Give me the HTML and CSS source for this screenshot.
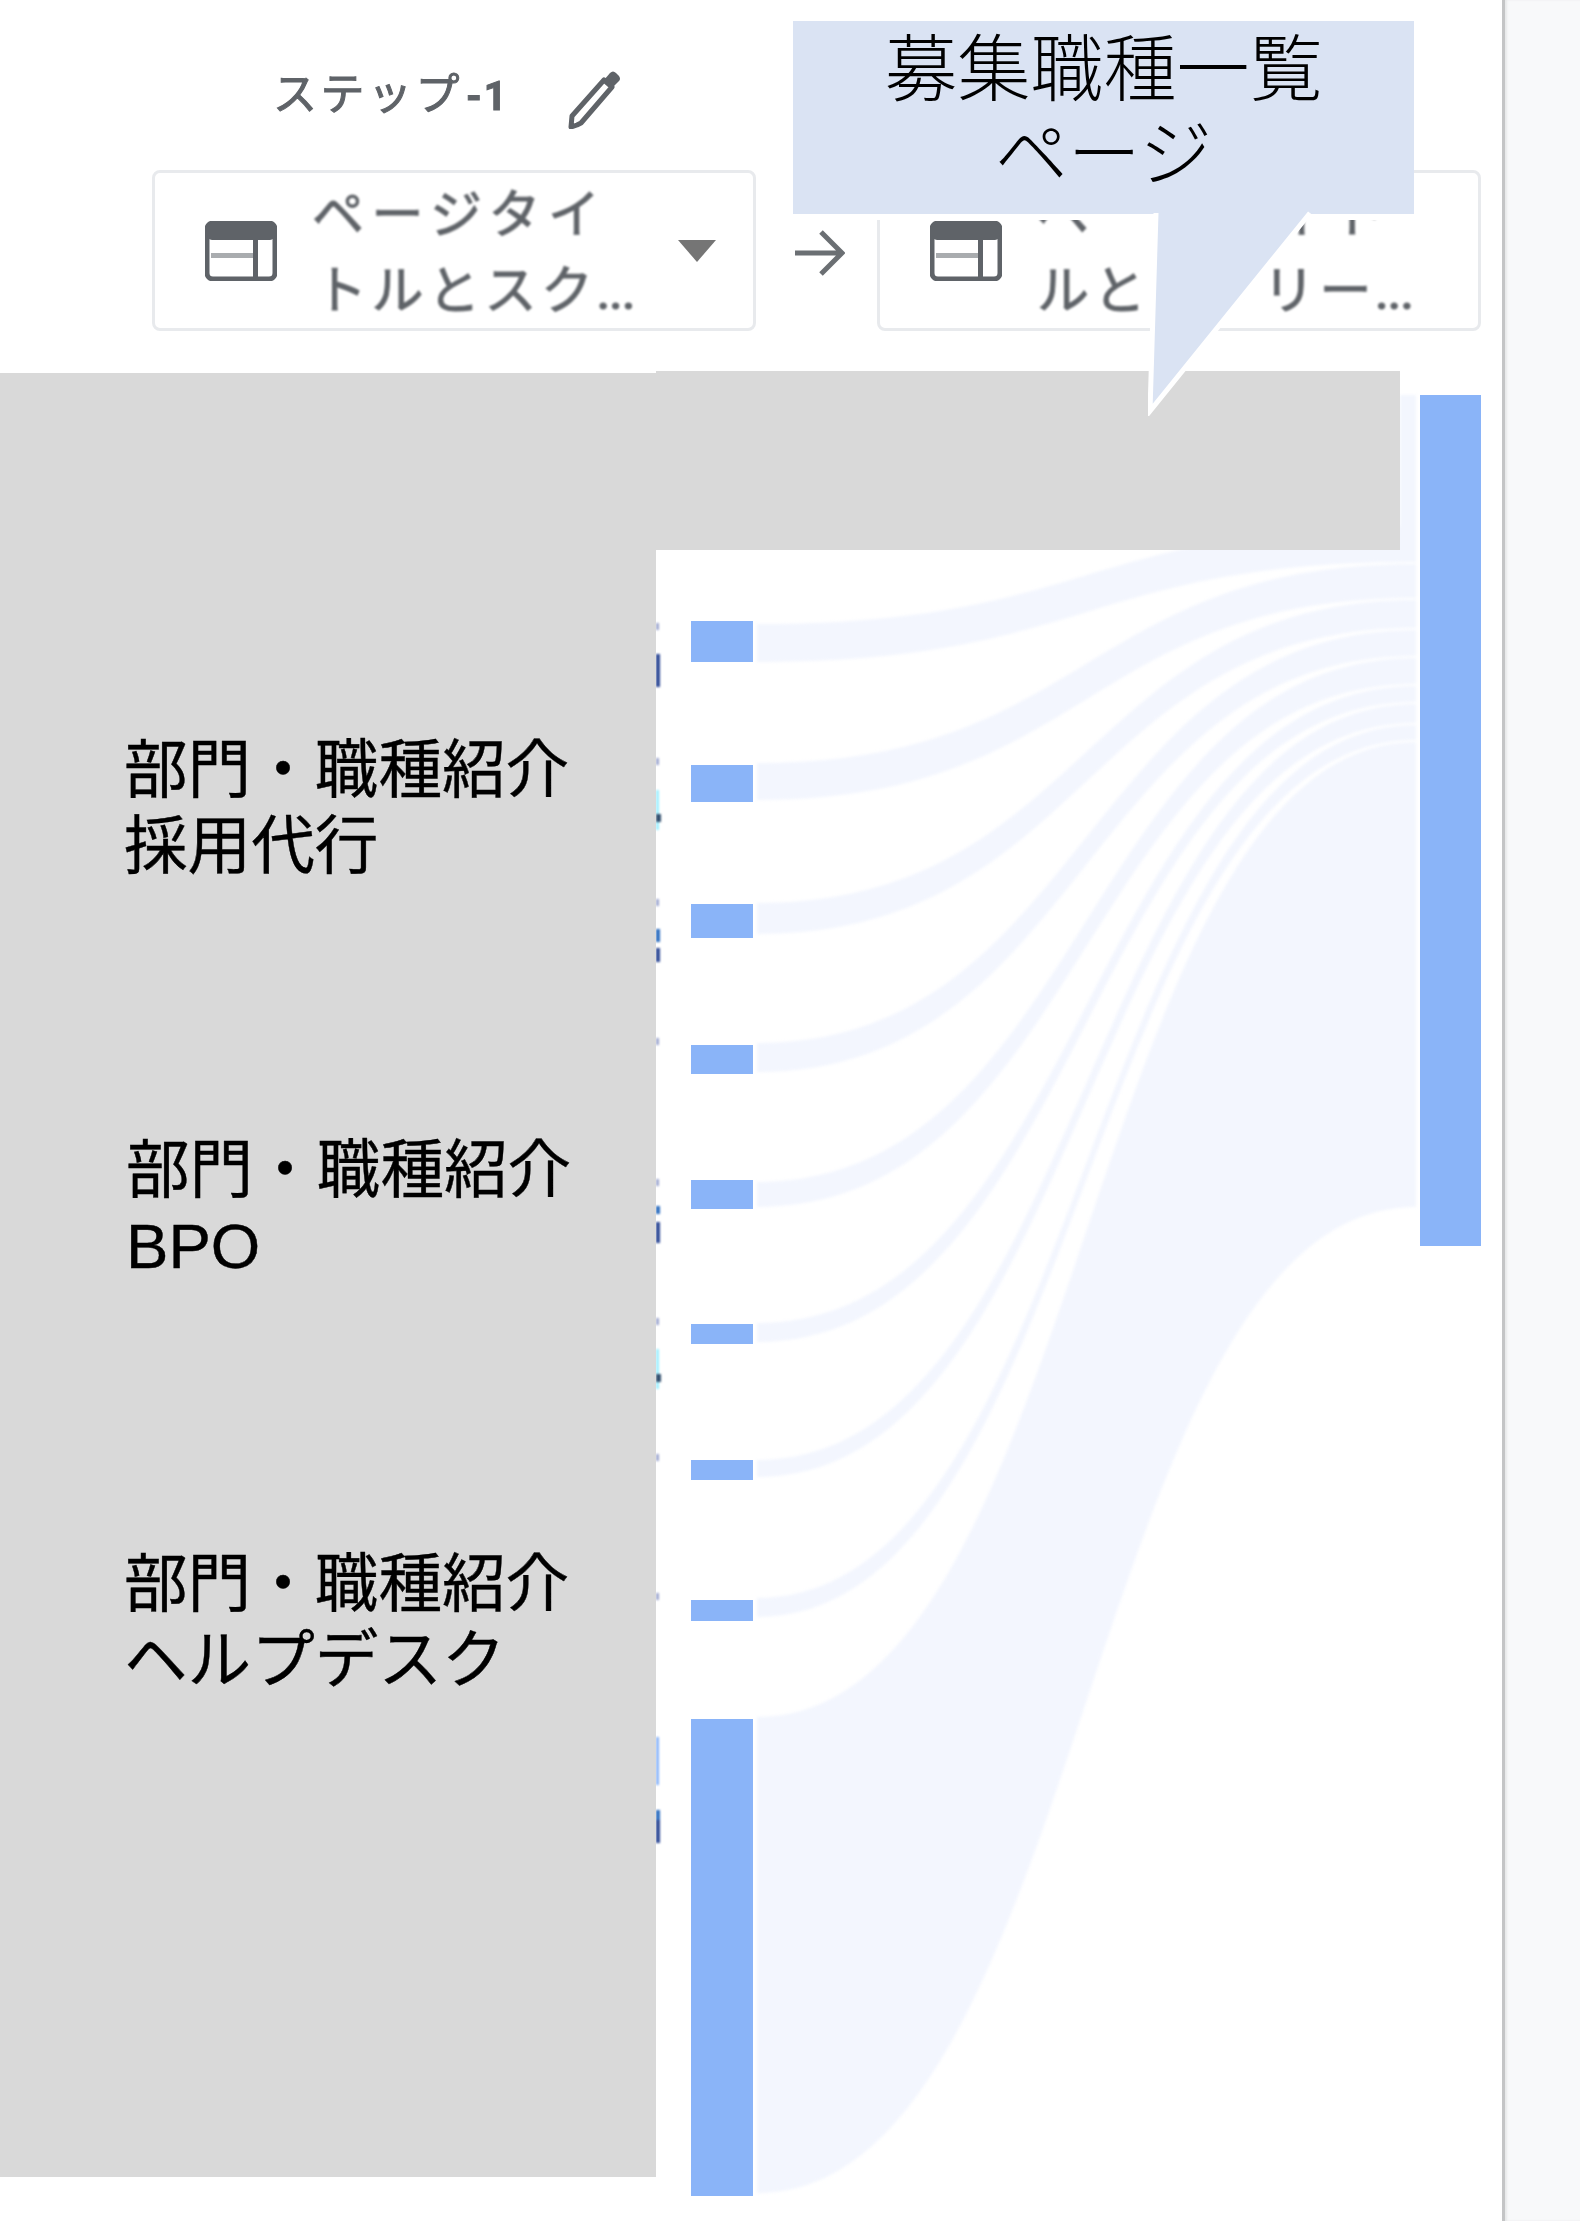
FILE: index.html
```html
<!DOCTYPE html>
<html lang="ja">

<head>
    <meta charset="UTF-8">
    <meta name="viewport" content="width=device-width, initial-scale=1.0">
    <title>ステップ-1</title>
    <link rel="stylesheet" href="styles.css">
</head>

<body>
    <div class="page">
        <main class="panel">
            <div class="step-row">
                <span class="step-name">ステップ<span class="step-num">-1</span></span>
                <svg class="pencil" viewBox="0 0 56 60">
                    <path d="M10 56 L4 58 L5 47 L37 11 L45 18 L14 54 Z" fill="none" stroke="#5f6368" stroke-width="5"
                        stroke-linejoin="round" />
                    <path d="M37 11 L43 4 Q46 1 49 4 L52 7 Q54 10 52 12 L45 19 Z" fill="#5f6368" />
                </svg>
            </div>

            <div class="select-row">
                <div class="select">
                    <svg class="table-icon" viewBox="0 0 72 60">
                        <rect x="2" y="2" width="68" height="56" rx="6" fill="none" stroke="#5f6368" stroke-width="5" />
                        <rect x="2" y="2" width="68" height="17" rx="5" fill="#5f6368" />
                        <rect x="6" y="32" width="42" height="5" fill="#a9acaf" />
                        <rect x="48" y="18" width="5" height="38" fill="#5f6368" />
                    </svg>
                    <div class="select-text">ページタイ<br><span class="second-line indent">トルとスク<span class="dots">...</span></span></div>
                    <span class="caret"></span>
                </div>
                <svg class="arrow" viewBox="0 0 52 50">
                    <path d="M2 25 H48 M28 4 L49 25 L28 46" fill="none" stroke="#6b6f73" stroke-width="5" />
                </svg>
                <div class="select">
                    <svg class="table-icon" viewBox="0 0 72 60">
                        <rect x="2" y="2" width="68" height="56" rx="6" fill="none" stroke="#5f6368" stroke-width="5" />
                        <rect x="2" y="2" width="68" height="17" rx="5" fill="#5f6368" />
                        <rect x="6" y="32" width="42" height="5" fill="#a9acaf" />
                        <rect x="48" y="18" width="5" height="38" fill="#5f6368" />
                    </svg>
                    <div class="select-text">ページタイト<br><span class="second-line">ルとスクリー<span class="dots">...</span></span></div>
                </div>
            </div>

            <!-- coordinates in the viewBox are page pixels -->
            <svg class="sankey" viewBox="0 371 1502 1850">
                <g class="flows" fill="#f3f6fe">
                    <rect x="1400" y="395" width="16" height="131" />
                    <path d="M757 624 C1087 624 1087 526 1416 526 L1416 562 C1087 562 1087 662 757 662 Z" />
                    <path d="M757 763 C1087 763 1087 564 1416 564 L1416 598 C1087 598 1087 800 757 800 Z" />
                    <path d="M757 903 C1087 903 1087 600 1416 600 L1416 628 C1087 628 1087 934 757 934 Z" />
                    <path d="M757 1043 C1087 1043 1087 630 1416 630 L1416 656 C1087 656 1087 1072 757 1072 Z" />
                    <path d="M757 1182 C1087 1182 1087 658 1416 658 L1416 684 C1087 684 1087 1207 757 1207 Z" />
                    <path d="M757 1323 C1087 1323 1087 686 1416 686 L1416 702 C1087 702 1087 1342 757 1342 Z" />
                    <path d="M757 1460 C1087 1460 1087 704 1416 704 L1416 723 C1087 723 1087 1477 757 1477 Z" />
                    <path d="M757 1598 C1087 1598 1087 725 1416 725 L1416 740 C1087 740 1087 1617 757 1617 Z" />
                    <path d="M757 1717 C1087 1717 1087 742 1416 742 L1416 1207 C1087 1207 1087 2193 757 2193 Z" />
                </g>
                <g class="nodes" fill="#8ab4f8">
                    <rect x="691" y="621" width="62" height="41" />
                    <rect x="691" y="765" width="62" height="37" />
                    <rect x="691" y="904" width="62" height="34" />
                    <rect x="691" y="1045" width="62" height="29" />
                    <rect x="691" y="1180" width="62" height="29" />
                    <rect x="691" y="1324" width="62" height="20" />
                    <rect x="691" y="1460" width="62" height="20" />
                    <rect x="691" y="1600" width="62" height="21" />
                    <rect x="691" y="1719" width="62" height="477" />
                    <rect x="1420" y="395" width="61" height="851" />
                </g>
                <!-- ends of the labels that stick out from under the grey block -->
                <g class="label-ends">
                    <rect x="656" y="623" width="3" height="7" fill="#9fa8d0" />
                    <rect x="656" y="654" width="4" height="33" fill="#2f4a96" />
                    <rect x="656" y="758" width="3" height="7" fill="#9fa8d0" />
                    <rect x="656" y="790" width="3" height="40" fill="#9eefff" />
                    <rect x="656" y="814" width="5" height="8" fill="#33506f" />
                    <rect x="656" y="899" width="3" height="7" fill="#9fa8d0" />
                    <rect x="656" y="929" width="4" height="13" fill="#2f6fc0" />
                    <rect x="656" y="948" width="4" height="14" fill="#2f4a96" />
                    <rect x="656" y="1038" width="3" height="7" fill="#9fa8d0" />
                    <rect x="656" y="1179" width="3" height="7" fill="#9fa8d0" />
                    <rect x="656" y="1206" width="4" height="8" fill="#2f6fc0" />
                    <rect x="656" y="1222" width="4" height="21" fill="#2f4a96" />
                    <rect x="656" y="1318" width="3" height="7" fill="#9fa8d0" />
                    <rect x="656" y="1349" width="3" height="40" fill="#9eefff" />
                    <rect x="656" y="1374" width="5" height="8" fill="#33506f" />
                    <rect x="656" y="1454" width="3" height="7" fill="#9fa8d0" />
                    <rect x="656" y="1593" width="3" height="7" fill="#9fa8d0" />
                    <rect x="656" y="1737" width="3" height="48" fill="#8ab4f8" />
                    <rect x="656" y="1810" width="4" height="10" fill="#2f6fc0" />
                    <rect x="656" y="1820" width="4" height="23" fill="#2f4a96" />
                </g>
            </svg>
        </main>
        <div class="gutter"></div>

        <!-- grey cover pasted over the report -->
        <div class="cover-top"></div>
        <div class="cover-left">
            <p class="cover-label">部門・職種紹介<br>採用代行</p>
            <p class="cover-label label-bpo">部門・職種紹介<br>BPO</p>
            <p class="cover-label label-help">部門・職種紹介<br>ヘルプデスク</p>
        </div>

        <div class="callout">
            <svg class="callout-tail" viewBox="0 0 180 205">
                <path d="M8 2 L2 200 L162 2" fill="#dae3f3" stroke="#fff" stroke-width="5" />
            </svg>
            <div class="callout-text">募集職種一覧<br>ページ</div>
        </div>
    </div>
</body>

</html>
```

FILE: styles.css
```css
* {
    box-sizing: border-box;
}

body {
    margin: 0;
    background: #fff;
    font-family: "Liberation Sans", "Noto Sans CJK JP", sans-serif;
}

.page {
    position: relative;
    display: flex;
    width: 1580px;
    height: 2221px;
    overflow: hidden;
}

.panel {
    width: 1502px;
    background: #fff;
}

.gutter {
    flex: 1;
    background: #f8f9fa;
    border-left: 3px solid #c4c5c6;
    box-shadow: inset 2px 0 2px #e8e9ea;
}

.step-row {
    display: flex;
    align-items: center;
    height: 70px;
    margin-top: 60px;
    padding-left: 273px;
}

.step-name {
    width: 294px;
    padding-top: 2px;
    font-family: Roboto, "Noto Sans CJK JP", sans-serif;
    font-size: 44px;
    line-height: 70px;
    letter-spacing: 3.5px;
    color: #5f6368;
    -webkit-text-stroke: 1px #5f6368;
    filter: blur(.7px);
}

.step-num {
    margin-left: 3px;
    font-size: 40px;
    font-weight: 700;
    letter-spacing: 2px;
}

.pencil {
    width: 56px;
    height: 60px;
    margin-top: 8px;
    filter: blur(.5px);
}

.select-row {
    display: flex;
    align-items: center;
    height: 161px;
    margin-top: 40px;
    padding-left: 152px;
}

.select {
    display: flex;
    align-items: center;
    width: 604px;
    height: 161px;
    padding-left: 50px;
    border: 3px solid #e8eaed;
    border-radius: 8px;
}

.table-icon {
    flex: none;
    width: 72px;
    height: 60px;
    margin-right: 35px;
    filter: blur(.7px);
}

.select-text {
    width: 366px;
    padding-top: 11px;
    font-family: Roboto, "Noto Sans CJK JP", sans-serif;
    font-size: 52px;
    line-height: 76px;
    letter-spacing: 7.5px;
    color: #5f6368;
    white-space: nowrap;
    -webkit-text-stroke: 1px #5f6368;
    filter: blur(.8px);
}

.second-line {
    letter-spacing: 4.5px;
}

.indent {
    margin-left: 3px;
}

.dots {
    font-size: 40px;
    font-weight: 700;
    letter-spacing: 1px;
}

.caret {
    width: 0;
    height: 0;
    border-left: 19px solid transparent;
    border-right: 19px solid transparent;
    border-top: 22px solid #757575;
    filter: blur(.5px);
}

.arrow {
    width: 52px;
    height: 50px;
    margin: 4px 32px 0 37px;
    filter: blur(.6px);
}

.sankey {
    display: block;
    width: 1502px;
    height: 1850px;
    margin-top: 40px;
}

.flows {
    filter: blur(1.5px);
}

.nodes {
    filter: blur(.5px);
}

.label-ends {
    filter: blur(.8px);
}

.cover-top {
    position: absolute;
    left: 656px;
    top: 371px;
    width: 744px;
    height: 179px;
    background: #d9d9d9;
}

.cover-left {
    position: absolute;
    left: 0;
    top: 373px;
    width: 656px;
    height: 1804px;
    padding: 359px 0 0 124px;
    background: #d9d9d9;
}

.cover-label {
    margin: 0;
    font-size: 63.6px;
    line-height: 76px;
    color: #000;
    -webkit-text-stroke: .4px #000;
}

.label-bpo {
    margin: 248px 0 0 2px;
}

.label-help {
    margin-top: 262px;
}

.callout {
    position: absolute;
    left: 793px;
    top: 21px;
    width: 621px;
    height: 193px;
    background: #dae3f3;
    box-shadow: 0 6px 0 #fff;
}

.callout-tail {
    position: absolute;
    left: 355px;
    top: 190px;
    width: 180px;
    height: 205px;
}

.callout-text {
    position: relative;
    font-family: "Noto Sans CJK JP", sans-serif;
    font-size: 73px;
    font-weight: 300;
    line-height: 85px;
    text-align: center;
    color: #000;
}
```
